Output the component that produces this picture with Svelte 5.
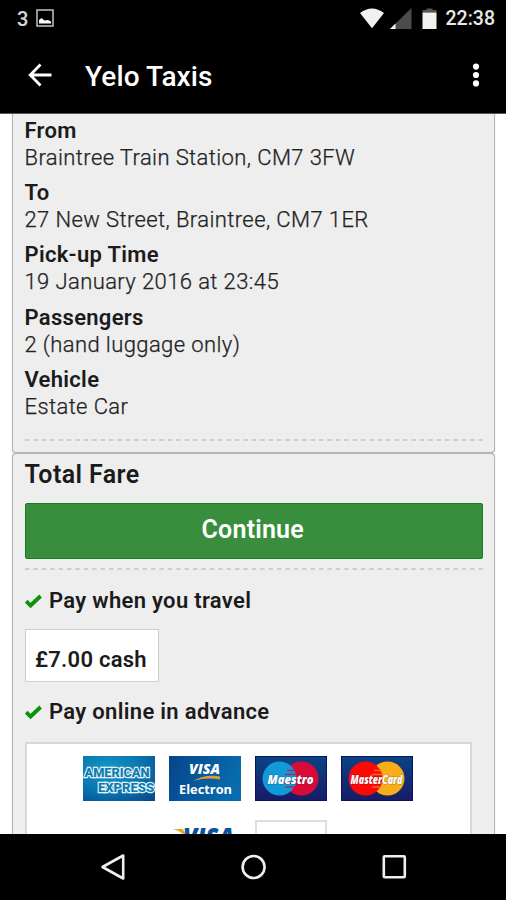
<script lang="ts">
  const time = '22:38';

  const details = [
    { label: 'From', value: 'Braintree Train Station, CM7 3FW' },
    { label: 'To', value: '27 New Street, Braintree, CM7 1ER' },
    { label: 'Pick-up Time', value: '19 January 2016 at 23:45' },
    { label: 'Passengers', value: '2 (hand luggage only)' },
    { label: 'Vehicle', value: 'Estate Car' }
  ];
</script>

{#snippet tick()}
  <svg class="tick" width="17" height="15" viewBox="0 0 17 15">
    <path d="M1.2 7.2 L5.6 11.5 L15.6 2" fill="none" stroke="#0a930d" stroke-width="3.8" />
  </svg>
{/snippet}

<div class="screen">
  <header>
    <div class="status-bar">
      <span class="count">3</span>
      <svg class="picture" width="18" height="18" viewBox="0 0 18 18">
        <rect x="1" y="1" width="16" height="16" fill="none" stroke="#c4c4c4" stroke-width="1.5" />
        <path d="M3 14.5 V11 L5.5 9 L8.5 11.5 L12 11 L15 12.5 V14.5 Z" fill="#fff" />
      </svg>
      <div class="spacer"></div>
      <svg class="signals" width="78" height="22" viewBox="0 0 78 22">
        <path d="M0 5 Q12 -4 24 5 L12 20.3 Z" fill="#f1f1f1" />
        <path d="M51.5 0 V21 H30 Z" fill="#4c4c4c" />
        <path d="M35.5 15.5 V21 H30 Z" fill="#f5f5f5" />
        <path d="M62.5 4.5 V2 H66.5 V0.5 H72.5 V2 H76.5 V4.5 Z" fill="#555" />
        <rect x="62.5" y="4.5" width="14" height="16.5" fill="#f1f1f1" />
      </svg>
      <span class="time">{time}</span>
    </div>
    <div class="app-bar">
      <svg width="24" height="24" viewBox="0 0 24 24">
        <path d="M12.5 1.5 L2.2 12 L12.5 22.5 M2.5 12 H23.5" fill="none" stroke="#fff" stroke-width="2.8" />
      </svg>
      <h1>Yelo Taxis</h1>
      <svg width="8" height="24" viewBox="0 0 8 24">
        <circle cx="4" cy="3.6" r="3.1" fill="#fff" />
        <circle cx="4" cy="12" r="3.1" fill="#fff" />
        <circle cx="4" cy="20.4" r="3.1" fill="#fff" />
      </svg>
    </div>
  </header>

  <main>
    <section class="card trip">
      <dl>
        {#each details as item}
          <div class="item">
            <dt>{item.label}</dt>
            <dd>{item.value}</dd>
          </div>
        {/each}
      </dl>
      <svg class="dashes" width="458" height="2"><path d="M0 1 H458" stroke="#cecece" stroke-width="2" stroke-dasharray="4.4 4" /></svg>
    </section>

    <section class="card fare">
      <h2>Total Fare</h2>
      <button>Continue</button>
      <svg class="dashes" width="458" height="2"><path d="M0 1 H458" stroke="#c4c4c4" stroke-width="1.6" stroke-dasharray="4.4 4" /></svg>
      <h3>{@render tick()}<span>Pay when you travel</span></h3>
      <div class="cash">£7.00 cash</div>
      <h3>{@render tick()}<span>Pay online in advance</span></h3>
      <div class="methods">
        <svg width="72" height="45" viewBox="0 0 72 45">
          <defs>
            <radialGradient id="amex" cx="0.35" cy="0.3" r="0.9">
              <stop offset="0" stop-color="#159bc8" />
              <stop offset="0.6" stop-color="#0870ac" />
              <stop offset="1" stop-color="#074b8d" />
            </radialGradient>
          </defs>
          <rect width="72" height="45" fill="url(#amex)" />
          <g class="amex">
            <text x="1.5" y="21.3" textLength="65" lengthAdjust="spacingAndGlyphs">AMERICAN</text>
            <text x="15" y="36" textLength="56" lengthAdjust="spacingAndGlyphs">EXPRESS</text>
          </g>
        </svg>
        <svg width="72" height="45" viewBox="0 0 72 45">
          <defs>
            <linearGradient id="electron" x1="0" y1="0" x2="1" y2="0.3">
              <stop offset="0" stop-color="#064488" />
              <stop offset="1" stop-color="#086bae" />
            </linearGradient>
          </defs>
          <rect width="72" height="45" fill="url(#electron)" />
          <text class="visa" x="20" y="18" textLength="31" lengthAdjust="spacingAndGlyphs">VISA</text>
          <path d="M24 25 Q36 18 51 20.5 V23.5 Q38 21 24 25 Z" fill="#e59a2c" />
          <text class="electron" x="10" y="38" textLength="53" lengthAdjust="spacingAndGlyphs">Electron</text>
        </svg>
        <svg width="72" height="45" viewBox="0 0 72 45">
          <defs>
            <linearGradient id="navy" x1="0" y1="0" x2="0" y2="1">
              <stop offset="0" stop-color="#0a4385" />
              <stop offset="1" stop-color="#171b66" />
            </linearGradient>
          </defs>
          <rect x="0.5" y="0.5" width="71" height="44" fill="url(#navy)" stroke="#09135e" />
          <circle cx="46.5" cy="22.5" r="17" fill="#d80a38" />
          <circle cx="24.5" cy="22.5" r="17" fill="#109bd8" />
          <path d="M32 14.5 H39 M30 18.5 H41 M29 27 H41 M30 31 H39" stroke="#a72a5e" stroke-width="1.6" />
          <text class="maestro" x="12.5" y="27.5" textLength="46" lengthAdjust="spacingAndGlyphs">Maestro</text>
        </svg>
        <svg width="72" height="45" viewBox="0 0 72 45">
          <rect x="0.5" y="0.5" width="71" height="44" fill="url(#navy)" stroke="#09135e" />
          <circle cx="46.5" cy="22.5" r="17" fill="#f8ad1a" />
          <circle cx="24.5" cy="22.5" r="17" fill="#fb0807" />
          <path d="M33 14.5 H40 M31 18.5 H42 M30 27 H42 M31 31 H40" stroke="#f46b10" stroke-width="1.6" />
          <text class="maestro" x="9.5" y="27.8" textLength="52" lengthAdjust="spacingAndGlyphs">MasterCard</text>
        </svg>
        <svg width="72" height="45" viewBox="0 0 72 45">
          <path d="M4 9 H13 Q16 10 17 17 Q12 11 4 9 Z" fill="#eba61c" />
          <text class="visa-blue" x="14" y="27" textLength="51" lengthAdjust="spacingAndGlyphs">VISA</text>
        </svg>
        <div class="blank-method"></div>
      </div>
    </section>
  </main>

  <nav>
    <svg width="506" height="66" viewBox="0 0 506 66" fill="none" stroke="#efefef" stroke-width="2.6">
      <path d="M123.2 21.5 V44.5 L102.5 33 Z" stroke-linejoin="round" />
      <circle cx="253.6" cy="33" r="11" />
      <rect x="383.8" y="22.3" width="21" height="21" rx="1" />
    </svg>
  </nav>
</div>

<style>
  :global(body) {
    margin: 0;
    background: #fff;
  }

  .screen {
    width: 506px;
    height: 900px;
    display: flex;
    flex-direction: column;
    overflow: hidden;
    color: #1b1b1b;
    font-family: Roboto, "Liberation Sans", sans-serif;
  }

  h1, h2, h3, dl, dd {
    margin: 0;
  }

  svg {
    display: block;
    flex: none;
  }

  header {
    height: 113px;
    flex: none;
    background: #000;
    border-bottom: 1px solid #555;
    color: #fff;
  }

  .status-bar {
    display: flex;
    align-items: center;
    height: 37px;
    padding: 0 11px 0 17px;
  }

  .count {
    width: 19px;
    font-size: 20px;
    font-weight: 500;
    color: #d8d8d8;
  }

  .picture {
    margin-bottom: 1px;
  }

  .spacer {
    flex: 1;
  }

  .signals {
    margin: 0 8px 0 0;
  }

  .time {
    padding-top: 1px;
    font-size: 19.5px;
    font-weight: 500;
    line-height: 36px;
    color: #e8e8e8;
  }

  .app-bar {
    display: flex;
    align-items: center;
    height: 76px;
    padding: 0 26px 0 28px;
  }

  h1 {
    flex: 1;
    margin: 4px 0 0 33px;
    font-size: 28px;
    font-weight: 500;
    line-height: 32px;
    letter-spacing: 0.1px;
  }

  main {
    flex: 1;
    min-height: 0;
    overflow: hidden;
    padding: 0 11px 0 12px;
  }

  .card {
    box-sizing: border-box;
    border: 1px solid #b5b5b5;
    border-radius: 4px;
    background: #eee;
    padding: 0 12px 0 11.5px;
    box-shadow: 0 0 1px #aaa;
  }

  .trip {
    height: 339px;
    border-top: 0;
    border-radius: 0 0 4px 4px;
    padding-top: 3px;
  }

  .item {
    height: 62.2px;
    font-size: 22px;
    line-height: 27px;
    letter-spacing: 0.4px;
    white-space: nowrap;
  }

  dt {
    font-weight: 600;
    letter-spacing: 0.3px;
  }

  dd {
    color: #222;
    font-weight: 300;
    -webkit-text-stroke: 0.25px #222;
  }

  .trip .dashes {
    margin-top: 11px;
  }

  .fare {
    height: 500px;
  }

  h2 {
    padding-top: 5px;
    font-size: 25px;
    font-weight: 600;
    line-height: 31px;
    letter-spacing: 0.4px;
  }

  button {
    display: block;
    box-sizing: border-box;
    width: 458.5px;
    height: 56px;
    margin: 13px 0 9px;
    border: 1px solid #1c7d20;
    border-radius: 2px;
    background: #388e3c;
    color: #fff;
    font: 600 25px/50px Roboto, sans-serif;
    letter-spacing: 0.2px;
    padding: 0 2px 2px 0;
  }

  h3 {
    display: flex;
    align-items: center;
    gap: 7.5px;
    height: 28px;
    font-size: 22px;
    font-weight: 600;
    letter-spacing: 0.32px;
  }

  .fare .dashes + h3 {
    margin-top: 16px;
  }

  .tick {
    margin-top: 2px;
  }

  .cash {
    box-sizing: border-box;
    width: 134px;
    height: 53px;
    margin: 15px 0;
    border: 1px solid #cfcfcf;
    background: #fff;
    padding-left: 9.5px;
    font-size: 22px;
    font-weight: 600;
    line-height: 59px;
    letter-spacing: 0.25px;
    white-space: nowrap;
  }

  .methods {
    box-sizing: border-box;
    display: flex;
    flex-wrap: wrap;
    align-content: flex-start;
    justify-content: center;
    gap: 19px 14px;
    width: 447px;
    height: 140px;
    margin-top: 17px;
    border: 2px solid #d8d8d8;
    background: #fff;
    padding: 12px 40px 12px 40px;
  }

  .amex text {
    font: 800 13.5px Roboto, sans-serif;
    fill: #087cad;
    stroke: #e4f1f7;
    stroke-width: 2.4;
    paint-order: stroke;
  }

  .visa {
    font: italic 800 14px "Open Sans", sans-serif;
    fill: #fff;
  }

  .electron {
    font: 700 13px "Open Sans", sans-serif;
    fill: #fff;
  }

  .maestro {
    font: italic 800 12.5px "Open Sans", sans-serif;
    fill: #fff;
    stroke: rgba(20, 20, 70, 0.35);
    stroke-width: 1;
    paint-order: stroke;
  }

  .visa-blue {
    font: italic 800 26px "Open Sans", sans-serif;
    fill: #07549b;
  }

  .blank-method {
    box-sizing: border-box;
    width: 72px;
    height: 45px;
    border: 2px solid #dedede;
    background: #fff;
  }

  nav {
    flex: none;
    height: 66px;
    background: #000;
  }
</style>
